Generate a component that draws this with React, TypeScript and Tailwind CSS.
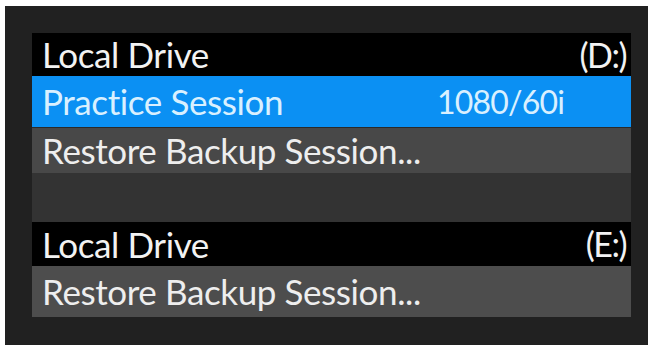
import React from 'react';

const font = { fontFamily: 'Lato, "Open Sans", sans-serif' };

const HeaderRow: React.FC<{ label: string; drive: string; h: string }> = ({ label, drive, h }) => (
  <div className={`flex items-center justify-between bg-black pl-[10px] pr-[5px] text-[#f2f2f2] ${h}`}>
    <span>{label}</span>
    <span className="text-[34px] tracking-[-1.5px]">{drive}</span>
  </div>
);

const App: React.FC = () => {
  return (
    <div className="w-[648px] h-[345px] bg-white pt-[6px] pl-[5px] overflow-hidden" style={font}>
      <div className="h-full bg-[#212121] pt-[27px] pl-[27px] pr-[17px]">
        <div className="flex flex-col text-[35px] leading-none tracking-[-0.4px]">
          <HeaderRow label="Local Drive" drive="(D:)" h="h-[43px]" />
          <div className="flex items-center h-[51px] bg-[#0b90f3] pl-[10px] text-[#d9f0ff]">
            <span className="w-[395px]">Practice Session</span>
            <span className="text-[32px] tracking-[-0.8px]">1080/60i</span>
          </div>
          <div className="flex items-center h-[46px] bg-[#484848] border-t border-[#2a2a2a] pl-[10px] text-[#eeeeee]">
            Restore Backup Session...
          </div>
          <div className="h-[49px] bg-[#333333]" />
          <HeaderRow label="Local Drive" drive="(E:)" h="h-[44px]" />
          <div className="flex items-center h-[51px] bg-[#4d4d4d] pl-[10px] text-[#eeeeee]">
            Restore Backup Session...
          </div>
        </div>
      </div>
    </div>
  );
};

export default App;
